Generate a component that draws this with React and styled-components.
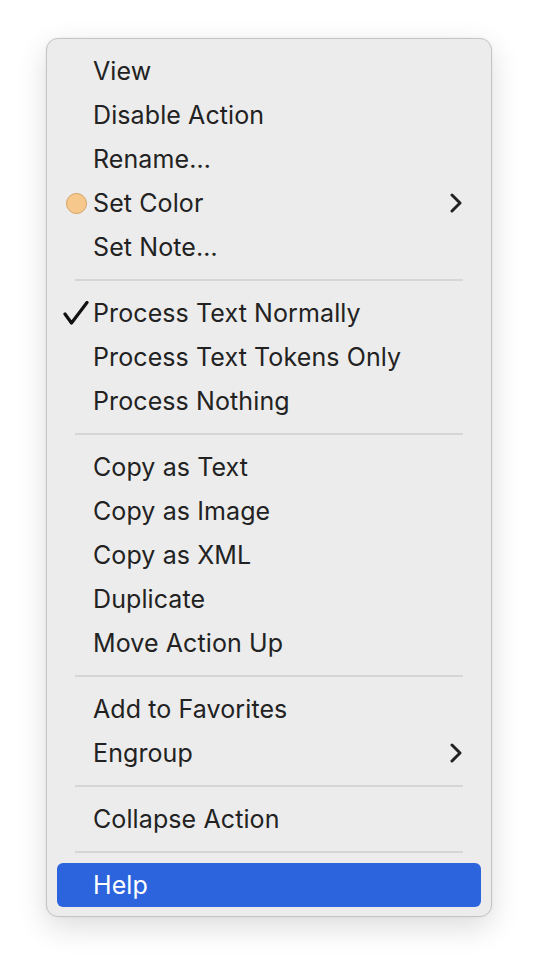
import React from "react";
import styled, { createGlobalStyle } from "styled-components";

const GlobalStyle = createGlobalStyle`
  body {
    margin: 0;
    background: #ffffff;
    font-family: Inter, "Noto Sans", "Liberation Sans", sans-serif;
  }
`;

const Page = styled.div`
  padding: 38px 46px 0 46px;
  height: 970px;
  box-sizing: border-box;
`;

const Menu = styled.div`
  width: 446px;
  box-sizing: border-box;
  background: #ececec;
  border: 1px solid #c4c4c4;
  border-radius: 12px;
  padding: 10px 10px 9px 10px;
  box-shadow: 0 10px 30px rgba(0, 0, 0, 0.14), 0 0 3px rgba(0, 0, 0, 0.06);
  display: flex;
  flex-direction: column;
`;

const Item = styled.div`
  height: 44px;
  display: flex;
  align-items: center;
  border-radius: 6px;
  padding: 0 18px 0 0;
  background: ${(p) => (p.$active ? "#2c64de" : "transparent")};
  color: ${(p) => (p.$active ? "#ffffff" : "#222222")};
  font-size: 25px;
  letter-spacing: 0.1px;
`;

const Lead = styled.div`
  width: 36px;
  display: flex;
  justify-content: flex-end;
  align-items: center;
  padding-right: 4px;
  box-sizing: border-box;
  flex: none;
`;

const Label = styled.span`
  flex: 1;
`;

const Swatch = styled.span`
  width: 21px;
  height: 21px;
  box-sizing: border-box;
  border-radius: 50%;
  background: #f7c88c;
  border: 1px solid #d4a062;
  margin-right: 2px;
`;

const Separator = styled.div`
  height: 22px;
  display: flex;
  align-items: center;
  padding: 0 18px;
  &::after {
    content: "";
    flex: 1;
    height: 2px;
    background: #d6d6d6;
  }
`;

const Chevron = () => (
  <svg width="14" height="20" viewBox="0 0 14 20">
    <path d="M3 2 L11 10 L3 18" fill="none" stroke="#222" strokeWidth="3" strokeLinecap="round" strokeLinejoin="round" />
  </svg>
);

const Check = () => (
  <svg width="26" height="24" viewBox="0 0 26 24">
    <path d="M2 13 L8.5 22 L24 1.5" fill="none" stroke="#111" strokeWidth="3.2" strokeLinecap="round" strokeLinejoin="round" />
  </svg>
);

const groups = [
  [
    { label: "View" },
    { label: "Disable Action" },
    { label: "Rename…" },
    { label: "Set Color", lead: "swatch", sub: true },
    { label: "Set Note…" },
  ],
  [
    { label: "Process Text Normally", lead: "check" },
    { label: "Process Text Tokens Only" },
    { label: "Process Nothing" },
  ],
  [
    { label: "Copy as Text" },
    { label: "Copy as Image" },
    { label: "Copy as XML" },
    { label: "Duplicate" },
    { label: "Move Action Up" },
  ],
  [{ label: "Add to Favorites" }, { label: "Engroup", sub: true }],
  [{ label: "Collapse Action" }],
  [{ label: "Help", active: true }],
];

export default function App() {
  return (
    <Page>
      <GlobalStyle />
      <Menu>
        {groups.map((group, gi) => (
          <React.Fragment key={gi}>
            {gi > 0 && <Separator />}
            {group.map((item) => (
              <Item key={item.label} $active={item.active}>
                <Lead>
                  {item.lead === "swatch" && <Swatch />}
                  {item.lead === "check" && <Check />}
                </Lead>
                <Label>{item.label}</Label>
                {item.sub && <Chevron />}
              </Item>
            ))}
          </React.Fragment>
        ))}
      </Menu>
    </Page>
  );
}
